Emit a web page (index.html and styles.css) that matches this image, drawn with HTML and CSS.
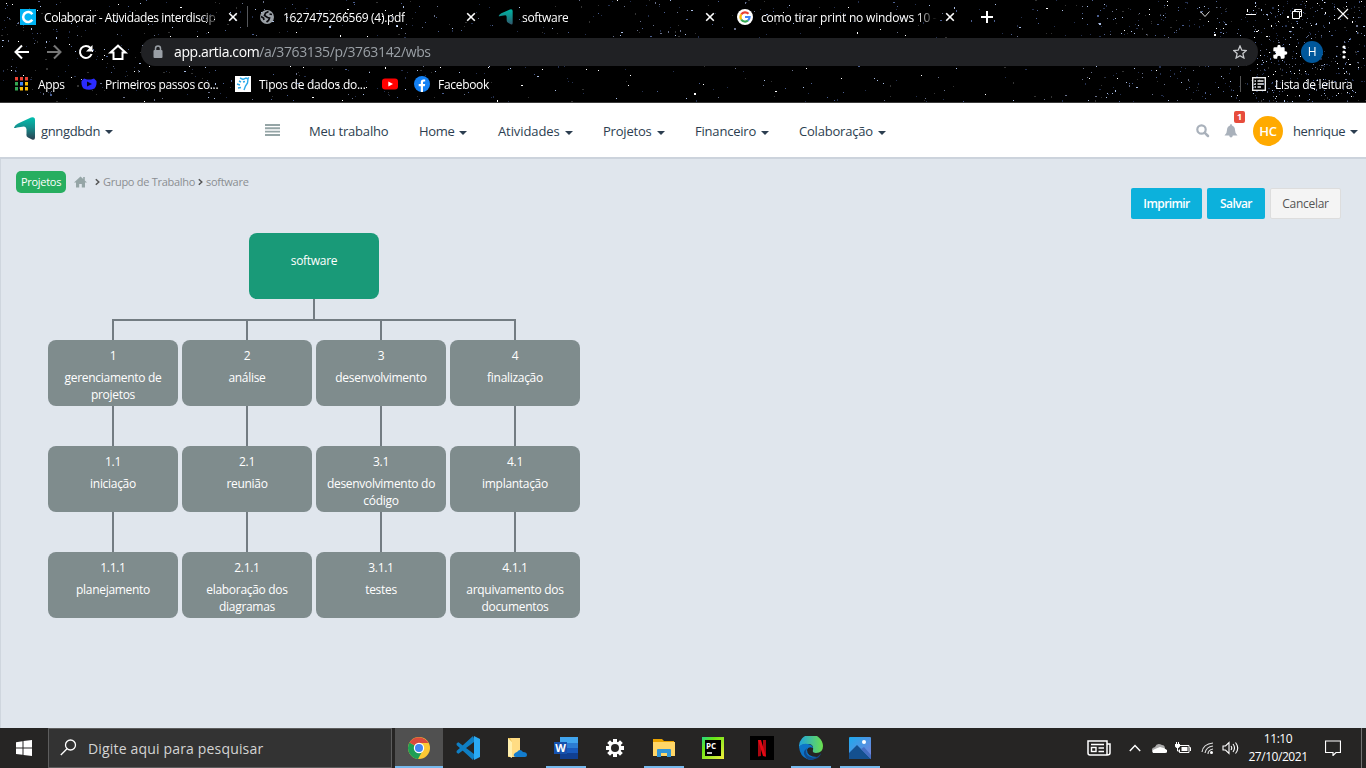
FILE: index.html
```html
<!DOCTYPE html>
<html lang="pt-BR">
<head>
<meta charset="utf-8">
<title>software</title>
<link rel="stylesheet" href="styles.css">
</head>
<body>
<svg class="defs" width="0" height="0"><defs>
<linearGradient id="teal" x1="0" y1="0" x2="0" y2="1"><stop offset="0" stop-color="#00bfae"/><stop offset=".45" stop-color="#148f8d"/><stop offset="1" stop-color="#2c3e50"/></linearGradient>
<linearGradient id="tealtab" x1="0" y1="0" x2="0" y2="1"><stop offset="0" stop-color="#00b5a5"/><stop offset=".5" stop-color="#148b8b"/><stop offset="1" stop-color="#31576b"/></linearGradient>
<linearGradient id="edgeg" x1="0" y1="0" x2="1" y2="0"><stop offset="0" stop-color="#1fa2df"/><stop offset="1" stop-color="#6be04d"/></linearGradient>
<linearGradient id="pcg" x1="0" y1="0" x2="1" y2="1"><stop offset="0" stop-color="#21d789"/><stop offset=".3" stop-color="#67e516"/><stop offset="1" stop-color="#f5f03d"/></linearGradient>
<linearGradient id="phg" x1="0" y1="0" x2="1" y2="1"><stop offset="0" stop-color="#1da9ee"/><stop offset="1" stop-color="#7c7fd8"/></linearGradient>
<symbol id="x" viewBox="0 0 10 10"><path d="M1.200 1.200l7.600 7.600M8.800 1.200L1.200 8.800" stroke="#fff" stroke-width="1.600"/></symbol>
</defs></svg>

<header class="browser">
  <canvas id="stars" class="stars" width="1366" height="102"></canvas>
  <div class="tabs">
    <div class="tab divided"><svg width="16" height="16"><rect width="16" height="16" fill="#00b4f4"/><path d="M12.300 5.200A5 5 0 1 0 12.300 10.800" fill="none" stroke="#fff" stroke-width="2.500"/></svg><span class="title faded t1">Colaborar - Atividades interdiscip</span><svg class="close" width="10" height="10"><use href="#x"/></svg></div>
    <div class="tab"><svg width="16" height="16"><circle cx="8" cy="8" r="7" fill="#9aa0a6"/><path d="M9.500 2.500L6.500 4 5.500 6.500 8.500 8.500 10.500 9 9.500 11.500 7.500 13M2 7.500L4.500 9 5 11M10.500 5L13 5.500" fill="none" stroke="#08080c" stroke-width="1.700"/></svg><span class="title t2">1627475266569 (4).pdf</span><svg class="close" width="10" height="10"><use href="#x"/></svg></div>
    <div class="tab"><svg width="16" height="16" viewBox="0 0 22 24"><path d="M0 10.500Q1 8 4 6.500L17 .6Q21 -.5 21 3V21Q21 24 18 23L14 20.500Q12 19.500 12 17V12Q12 9.500 10 9.500L3 10.500Q0 11.500 0 10.500Z" fill="url(#tealtab)"/></svg><span class="title">software</span><svg class="close" width="10" height="10"><use href="#x"/></svg></div>
    <div class="tab"><svg width="16" height="16"><circle cx="8" cy="8" r="8" fill="#fff"/><g fill="none" stroke-width="2.200"><path d="M4.200 5.500A4.600 4.600 0 0 1 11.500 4.800" stroke="#ea4335"/><path d="M4.200 5.500A4.800 4.800 0 0 0 4.200 10.500" stroke="#fbbc05"/><path d="M4.200 10.500A4.600 4.600 0 0 0 11 11.500" stroke="#34a853"/><path d="M8 8H12.600Q12.500 10 11 11.500" stroke="#4285f4"/></g></svg><span class="title faded t4">como tirar print no windows 10 -</span><svg class="close" width="10" height="10"><use href="#x"/></svg></div>
    <svg class="plus" width="12" height="12"><path d="M6 0V12M0 6H12" stroke="#fff" stroke-width="2"/></svg>
    <div class="window">
      <svg width="46" height="28"><path d="M18.500 11.500L23 16.500 27.500 11.500" fill="none" stroke="#ddd"/></svg>
      <svg width="46" height="28"><path d="M18 14.500H28" stroke="#fff"/></svg>
      <svg width="46" height="28"><path d="M18.500 11.500H25.500V18.500H18.500ZM20.500 11V9.500H27.500V16.500H26" fill="none" stroke="#fff"/></svg>
      <svg width="46" height="28"><path d="M18 9L28 19M28 9L18 19" stroke="#fff" stroke-width="1.200"/></svg>
    </div>
  </div>
  <div class="toolbar">
    <svg width="32" height="28"><path d="M23 14H10M16 7.500L9.500 14 16 20.500" fill="none" stroke="#fff" stroke-width="2"/></svg>
    <svg width="32" height="28"><path d="M9 14H22M16 7.500L22.500 14 16 20.500" fill="none" stroke="#777" stroke-width="2"/></svg>
    <svg width="32" height="28"><path d="M20.500 10A6 6 0 1 0 21.600 16" fill="none" stroke="#fff" stroke-width="2"/><path d="M22.500 7V13.500H16Z" fill="#fff"/></svg>
    <svg width="32" height="28"><path d="M8.500 14.500L16 7.700 23.500 14.500H20.500V21H11.500V14.500Z" fill="none" stroke="#fff" stroke-width="2"/></svg>
    <div class="address"><svg width="33" height="28"><rect x="12.500" y="12" width="9" height="8" rx="1" fill="#9aa0a6"/><path d="M14.500 12V10.500A2.500 2.500 0 0 1 19.500 10.500V12" fill="none" stroke="#9aa0a6" stroke-width="1.500"/></svg><span class="url"><b>app.artia.com</b>/a/3763135/p/3763142/wbs</span><svg class="fav" width="14" height="14"><path d="M7 1L8.800 5.200 13.300 5.600 9.900 8.600 10.900 13 7 10.700 3.100 13 4.100 8.600 .7 5.600 5.200 5.200Z" fill="none" stroke="#c8cacd" stroke-width="1.300"/></svg></div>
    <svg class="puzzle" width="16" height="16" viewBox="0 0 24 24"><path fill="#fff" d="M20.500 11H19V7c0-1.100-.9-2-2-2h-4V3.500a2.500 2.500 0 0 0-5 0V5H4a2 2 0 0 0-2 2v3.800h1.500a2.700 2.700 0 0 1 0 5.400H2V20c0 1.100.9 2 2 2h3.800v-1.500a2.700 2.700 0 0 1 5.400 0V22H17a2 2 0 0 0 2-2v-4h1.500a2.500 2.500 0 0 0 0-5z"/></svg>
    <span class="profile">H</span>
    <svg class="dots" width="6" height="16" fill="#fff"><circle cx="3" cy="3" r="1.600"/><circle cx="3" cy="8" r="1.600"/><circle cx="3" cy="13" r="1.600"/></svg>
  </div>
  <div class="bookmarks">
    <svg class="apps" width="14" height="14"><path fill="#ea4335" d="M1 0h3v3.500H1zM6 0h3v3.500H6zM11 0h3v3.500h-3z"/><path fill="#34a853" d="M1 5h3v3.500H1zM1 10h3v3.500H1z"/><path fill="#4285f4" d="M6 5h3v3.500H6z"/><path fill="#fbbc05" d="M11 5h3v3.500h-3zM6 10h3v3.500H6zM11 10h3v3.500h-3z"/></svg>
    <span class="b1">Apps</span>
    <svg width="16" height="16"><path d="M3 2.500L6 3.500H10L13 2.500 15.500 5Q16 10 13.500 12.500Q8 15 2.500 12.500Q0 10 .5 5Z" fill="#2b2bff"/><path d="M6 5.500L11 8 6 10.500Z" fill="#05051c"/></svg>
    <span class="b2">Primeiros passos co...</span>
    <svg width="16" height="16"><rect width="16" height="16" fill="#fff"/><path d="M5 2L8 3.500 11 2 13 3 12.500 7 10.500 10 9 14M8 6L10 5.500M4 5L6 6M2 8L5 9M3 12L6 11.500M12 3L14 1.500" fill="none" stroke="#2ba9ea" stroke-width="1.400"/></svg>
    <span class="b3">Tipos de dados do...</span>
    <svg width="16" height="16"><rect y="2.500" width="16" height="11" rx="3" fill="#f00"/><path d="M6.300 5.500L11 8 6.300 10.500Z" fill="#fff"/></svg>
    <svg class="fb" width="16" height="16"><circle cx="8" cy="8" r="8" fill="#1381f5"/><path d="M6.800 16V10.200H4.700V7.900H6.800V6.200Q6.800 3.400 9.500 3.400H11.200V5.400H10Q9 5.400 9 6.500V7.900H11.200L10.800 10.200H9V16Z" fill="#fff"/></svg>
    <span>Facebook</span>
    <div class="reading"><svg width="14" height="14"><rect x=".7" y=".7" width="12.600" height="12.600" fill="none" stroke="#eee" stroke-width="1.400"/><path d="M2.500 4H4M5.500 4H11.500M2.500 7H4M5.500 7H11.500M2.500 10H4M5.500 10H9" stroke="#eee" stroke-width="1.500"/></svg><span>Lista de leitura</span></div>
  </div>
</header>

<nav class="appbar">
  <div class="brand"><svg width="22" height="24"><path d="M0 10.500Q1 8 4 6.500L17 .6Q21 -.5 21 3V20.500Q21 23.500 18 22.500L14 20.500Q12 19.500 12.500 17V12Q12 9.500 10 9.500L3 10.500Q0 11.500 0 10.500Z" fill="url(#teal)"/></svg><span>gnngdbdn</span><i class="caret"></i></div>
  <svg class="burger" width="15" height="12"><path d="M0 1H15M0 4.300H15M0 7.600H15M0 11H15" stroke="#95a5a6" stroke-width="1.900"/></svg>
  <div class="menu">
    <span class="m0">Meu trabalho</span>
    <span class="m1">Home<i class="caret"></i></span>
    <span class="m2">Atividades<i class="caret"></i></span>
    <span class="m3">Projetos<i class="caret"></i></span>
    <span class="m4">Financeiro<i class="caret"></i></span>
    <span class="m5">Colaboração<i class="caret"></i></span>
  </div>
  <div class="user">
    <svg width="14" height="14"><circle cx="5.500" cy="5.500" r="4.200" fill="none" stroke="#a9b1bb" stroke-width="2.200"/><path d="M8.800 8.800L12 12" stroke="#a9b1bb" stroke-width="2.500" stroke-linecap="round"/></svg>
    <div class="bell"><svg width="14" height="14"><path d="M7 0Q8 0 8 1.500Q11 2.500 11 6Q11 9.500 13.500 11.500H8.800Q8.500 13.500 7 13.500Q5.500 13.500 5.200 11.500H.5Q3 9.500 3 6Q3 2.500 6 1.500Q6 0 7 0Z" fill="#a9b1bb"/></svg><b>1</b></div>
    <span class="avatar">HC</span><span class="name">henrique</span><i class="caret"></i>
  </div>
</nav>

<main>
  <div class="top">
    <div class="crumbs"><span class="pill">Projetos</span><svg width="13" height="12"><path d="M6.500 .5L0 6.500H2V11.500H5.200V8H7.800V11.500H11V6.500H13L10.800 4.400V1H9.200V3Z" fill="#95a5a6"/></svg><svg class="sep" width="5" height="8"><path d="M.8 1.200L3.800 4 .8 6.800" fill="none" stroke="#555" stroke-width="1.500"/></svg><span class="c1">Grupo de Trabalho</span><svg class="sep2" width="5" height="8"><path d="M.8 1.200L3.800 4 .8 6.800" fill="none" stroke="#555" stroke-width="1.500"/></svg><span>software</span></div>
    <div class="actions"><button class="print">Imprimir</button><button class="save">Salvar</button><button class="cancel">Cancelar</button></div>
  </div>
  <section class="tree">
    <div class="node root">software</div>
    <div class="stem"></div>
    <div class="bar"></div>
    <div class="columns">
      <div class="column"><div class="node"><b>1</b>gerenciamento de<br>projetos</div><div class="node"><b>1.1</b>iniciação</div><div class="node"><b>1.1.1</b>planejamento</div></div>
      <div class="column"><div class="node"><b>2</b>análise</div><div class="node"><b>2.1</b>reunião</div><div class="node"><b>2.1.1</b>elaboração dos<br>diagramas</div></div>
      <div class="column"><div class="node"><b>3</b>desenvolvimento</div><div class="node"><b>3.1</b>desenvolvimento do<br>código</div><div class="node"><b>3.1.1</b>testes</div></div>
      <div class="column"><div class="node"><b>4</b>finalização</div><div class="node"><b>4.1</b>implantação</div><div class="node"><b>4.1.1</b>arquivamento dos<br>documentos</div></div>
    </div>
  </section>
</main>

<footer class="taskbar">
  <svg width="48" height="40" fill="#fff"><path d="M16 14.200L22.500 13.300V19.500H16ZM23.500 13.100L32 12V19.500H23.500ZM16 20.500H22.500V26.800L16 25.900ZM23.500 20.500H32V28L23.500 26.900Z"/></svg>
  <div class="search"><svg width="18" height="18"><circle cx="10.500" cy="6" r="5" fill="none" stroke="#fff" stroke-width="1.300"/><path d="M7 9.700L.8 16" stroke="#fff" stroke-width="1.300"/></svg><span>Digite aqui para pesquisar</span></div>
  <div class="running">
    <div class="app active open"><svg width="22" height="22"><circle cx="11" cy="11" r="11" fill="#fcc934"/><path d="M11 11L1.500 5.500A11 11 0 0 0 10 22L15 13Z" fill="#1e9e55"/><path d="M11 11L1.500 5.500A11 11 0 0 1 20.500 6H11Z" fill="#d94a3d"/><circle cx="11" cy="11" r="5.200" fill="#fff"/><circle cx="11" cy="11" r="4" fill="#4285f4"/></svg></div>
    <div class="app"><svg width="24" height="24"><path d="M17 0L19 5V19L17 24 .8 9.200Q0 8 1 7L2.500 6.300 18 18V6L2.500 17.700 1 17Q0 16 .8 14.800Z" fill="#0f7fc4"/><path d="M18 0L24 3V21L18 24Z" fill="#2aaaf4"/></svg></div>
    <div class="app"><svg width="20" height="22"><path d="M1 1H13V20H1Z" fill="#e9b943"/><path d="M3 1H13V20H5V5Z" fill="#ffdc83"/><path d="M1 1L5 5V21L1 19Z" fill="#fff0ae"/><path d="M9 20Q6 20 7 17Q9 15 10 15Q13 11 16 15Q20 15 20 18Q20 20 18 20Z" fill="#147dce"/></svg></div>
    <div class="app open"><svg width="24" height="22"><path d="M6 0H24V6H6Z" fill="#41a5ee"/><path d="M6 6H24V11H6Z" fill="#2b7cd3"/><path d="M6 11H24V16H6Z" fill="#185abd"/><path d="M6 16H24V22H6Z" fill="#103f91"/><rect y="5" width="13" height="12" fill="#1651ad"/><text x="1.200" y="15" class="wordletter">W</text></svg></div>
    <div class="app"><svg width="20" height="20"><g stroke="#fff" stroke-width="4"><path d="M10 1V19M1 10H19M3.600 3.600L16.400 16.400M16.400 3.600L3.600 16.400"/></g><circle cx="10" cy="10" r="6.500" fill="#fff"/><circle cx="10" cy="10" r="4" fill="#272625"/></svg></div>
    <div class="app open"><svg width="22" height="20"><path d="M0 1H9L11 3H21V8H0Z" fill="#eaa300"/><path d="M0 4H22V18H0Z" fill="#ffd667"/><path d="M4 19V12Q4 11 5 11H17Q18 11 18 12V19H14V15H8V19Z" fill="#3195d6"/></svg></div>
    <div class="app"><svg width="22" height="22"><rect width="22" height="22" fill="url(#pcg)"/><rect x="3" y="3" width="16" height="16" fill="#000"/><text x="4" y="12" class="pctext">PC</text><path d="M5 16H10" stroke="#fff" stroke-width="1.500"/></svg></div>
    <div class="app"><svg width="24" height="24"><rect width="24" height="24" fill="#000"/><path d="M8 4H11V20L8 20.500ZM13 4H16V20.500L13 20Z" fill="#a90610"/><path d="M8 4H11L16 20.500 13 20Z" fill="#e50914"/></svg></div>
    <div class="app open"><svg width="24" height="24"><path d="M0 11A12 12 0 0 1 24 10Q24 17 17 17Q13 17 14 14Q15 8 9 8Q3 8 0 11Z" fill="url(#edgeg)"/><path d="M0 11Q3 7 9 8Q14 9 14 12Q9 10 8 14Q8 21 18 21Q14 25 8 23Q1 20 0 11Z" fill="#0d75c8"/><path d="M8 12Q5 19 12 21Q18 23 22 17Q21 22 16 23Q9 26 6 20Q3 16 8 12Z" fill="#114a8b"/></svg></div>
    <div class="app open"><svg width="22" height="22"><rect width="22" height="22" rx="1" fill="url(#phg)"/><path d="M0 16L8 8 22 22H0Z" fill="#14508f"/><path d="M12 12L15 10 22 18V22Z" fill="#456fc3"/><circle cx="15" cy="5" r="2" fill="#fff"/></svg></div>
  </div>
  <div class="tray">
    <svg class="news" width="24" height="16"><path d="M1 1H20V15H3Q1 15 1 13ZM20 4H23V13Q23 15 20 15M4 4.500H17M11.500 8H17M11.500 11.500H17" fill="none" stroke="#fff" stroke-width="1.500"/><rect x="4.500" y="7.500" width="4.500" height="4" fill="none" stroke="#fff" stroke-width="1.400"/></svg>
    <svg class="chev" width="12" height="8"><path d="M.8 7L6 1.500 11.200 7" fill="none" stroke="#fff" stroke-width="1.400"/></svg>
    <svg class="cloud" width="16" height="11"><path d="M2 9Q-1 5 4 4Q6-1 11 2Q14 2 14 6V9Z" fill="#aaa"/><path d="M2 10Q0 7 4 6L9 4Q14 5 16 7Q17 10 14 10Z" fill="#fff"/></svg>
    <svg class="battery" width="16" height="12"><path d="M5 3.500H14V10.500H4.500V7.500M14.500 5.500H15.500V9" fill="none" stroke="#fff"/><path d="M6.500 5H12.500V9H6.500ZM0 2H5V4.500L3.500 6H1.500L0 4.500Z" fill="#fff"/><path d="M1.500 0V2M3.500 0V2M2.500 6V9H5" fill="none" stroke="#fff"/></svg>
    <svg class="wifi" width="14" height="14"><g fill="none" stroke="#ddd" stroke-width="1.200"><path d="M1 11Q2 3 12 2M4 12Q5 6 12 5M7 13Q7 9 12 8"/></g><circle cx="10.500" cy="11.500" r="1.500" fill="#fff"/></svg>
    <svg class="volume" width="17" height="14"><path d="M1 5H3.500L7 1.500V12.500L3.500 9H1ZM9 5Q10.500 7 9 9M11 3Q14 7 11 11M13.500 1.500Q18 7 13.500 12.500" fill="none" stroke="#fff" stroke-width="1.100"/></svg>
    <div class="clock"><span>11:10</span><span>27/10/2021</span></div>
    <svg class="note" width="16" height="16"><path d="M.5 1H15.500V12.500H11L8 15.500V12.500H.5Z" fill="none" stroke="#fff" stroke-width="1.200"/></svg>
    <i class="edge"></i>
  </div>
</footer>
<script src="stars.js"></script>
</body>
</html>
```
FILE: styles.css
```css
* { box-sizing: border-box; }
body { margin: 0; width: 1366px; height: 768px; overflow: hidden; display: flex; flex-direction: column; font: 12px "Open Sans", "Noto Sans", sans-serif; letter-spacing: -.3px; white-space: nowrap; }
svg { flex: none; display: block; }
.defs { position: absolute; }
.browser { position: relative; height: 103px; background: #000; color: #fff; border-bottom: 1px solid #3b3b3b; flex: none; }
.stars { position: absolute; left: 0; top: 0; }
.tabs, .toolbar, .bookmarks { position: relative; display: flex; align-items: center; }
.tabs { height: 34px; padding-left: 12px; }
.tab { width: 239px; height: 34px; display: flex; align-items: center; padding: 0 18px 0 8px; gap: 8px; flex: none; }
.tab:nth-child(4) { padding-right: 14px; width: 235px; }
.tab .close { margin: 0 -4px 0 auto; }
.divided { background: linear-gradient(#55575b, #55575b) 235px 6px / 1px 21px no-repeat; }
.title { overflow: hidden; flex: none; }
.faded { width: 176px; -webkit-mask-image: linear-gradient(90deg, #000 89%, transparent); mask-image: linear-gradient(90deg, #000 89%, transparent); }
.t1 { letter-spacing: -.4px; }
.t4 { letter-spacing: -.2px; }
.plus { margin-left: 17px; }
.window { display: flex; margin-left: 189px; height: 34px; }
.toolbar { height: 36px; padding-left: 6px; }
.address { display: flex; align-items: center; width: 1117px; height: 28px; border-radius: 14px; background: #202124; margin-left: 7px; }
.url { color: #9aa0a6; font-size: 14px; letter-spacing: -.37px; margin-top: -2px; }
.url b { color: #fff; font-weight: 400; }
.fav { margin: 0 11px 0 auto; }
.puzzle { margin-left: 14px; }
.profile { width: 22px; height: 22px; border-radius: 50%; background: #00579b; text-align: center; line-height: 22px; margin-left: 13px; }
.dots { margin-left: 18px; }
.bookmarks { height: 28px; padding-left: 14px; }
.bookmarks > svg { margin-right: 8px; }
.bookmarks > .apps { margin-right: 10px; }
.b1 { width: 43px; }
.b2 { width: 130px; letter-spacing: -.35px; }
.b3 { width: 123px; letter-spacing: -.25px; }
.bookmarks > .fb { margin-left: 8px; }
.reading { display: flex; align-items: center; gap: 9px; margin-left: auto; padding-left: 11px; width: 126px; border-left: 1px solid #555; height: 16px; }

.appbar { height: 56px; background: #fff; border-bottom: 2px solid #ccd3dc; display: flex; align-items: center; color: #2c3e50; font-size: 13px; flex: none; letter-spacing: -.2px; padding-top: 2px; }
.caret { display: inline-block; border: 4px solid transparent; border-top-color: #2c3e50; border-bottom: 0; margin-left: 5px; vertical-align: 1px; }
.brand { width: 265px; padding-left: 14px; display: flex; align-items: center; gap: 5px; }
.brand svg { margin-top: -4px; }
.brand span { letter-spacing: -.35px; }
.brand .caret, .user .caret { margin-left: 0; margin-top: 2px; }
.burger { margin-top: -2px; }
.menu { display: flex; padding-left: 29px; width: 916px; }
.m0 { width: 110px; } .m1 { width: 79px; } .m2 { width: 105px; } .m3 { width: 92px; } .m4 { width: 104px; }
.m1 { letter-spacing: -.35px; }
.m2 { letter-spacing: -.1px; }
.user { display: flex; align-items: center; }
.user > svg { margin-top: -1px; }
.bell { position: relative; margin-left: 14px; }
.bell b { position: absolute; left: 10px; top: -13px; width: 11px; height: 12px; border-radius: 2px; background: #e74c3c; color: #fff; font-size: 9px; line-height: 12px; text-align: center; }
.avatar { width: 30px; height: 30px; line-height: 30px; border-radius: 50%; background: #ffaa00; color: #fff; font-weight: 600; text-align: center; margin-left: 15px; margin-top: -1px; }
.name { margin-left: 10px; width: 57px; letter-spacing: -.35px; }

main { height: 569px; background: #e0e6ed; border-left: 1px solid #cfd6de; flex: none; }
.top { display: flex; justify-content: space-between; height: 74px; padding: 12px 25px 0 15px; }
.crumbs { display: flex; align-items: center; height: 22px; color: #8b8e92; font-size: 11px; letter-spacing: -.28px; line-height: 20px; }
.crumbs > span:not(.pill) { margin-top: -1px; }
.pill { width: 50px; height: 22px; border-radius: 5px; background: #27ae60; color: #fff; line-height: 22px; text-align: center; margin-right: 8px; }
.sep { margin: 0 3px 0 8px; }
.c1 { width: 95px; }
.sep2 { margin-right: 3px; }
.actions { display: flex; gap: 5px; padding-top: 17px; }
.actions button { height: 31px; padding: 0; border: 0; border-radius: 2px; background: #0cb1dc; color: #fff; font: 600 12px "Open Sans", sans-serif; letter-spacing: -.6px; }
.actions .print { width: 71px; } .actions .save { width: 58px; }
.actions .cancel { width: 71px; background: #f4f4f4; border: 1px solid #ddd; color: #555; font-weight: 400; letter-spacing: -.3px; }
.tree { width: 532px; margin-left: 47px; display: flex; flex-direction: column; align-items: center; letter-spacing: -.3px; }
.node { width: 130px; height: 66px; border-radius: 8px; background: #7f8c8d; color: #fff; text-align: center; line-height: 17px; padding-top: 7px; }
.node b { display: block; font-weight: 400; margin-bottom: 5px; }
.root { background: #199a78; padding-top: 19px; }
.stem { width: 2px; height: 20px; background: #737c82; }
.bar { width: 404px; height: 21px; border: 2px solid #737c82; border-bottom: 0; background: linear-gradient(#737c82, #737c82) 132px 0 / 2px 21px no-repeat, linear-gradient(#737c82, #737c82) 266px 0 / 2px 21px no-repeat; }
.columns { display: flex; gap: 4px; }
.column { display: flex; flex-direction: column; gap: 40px; background: linear-gradient(#737c82, #737c82) 64px 0 / 2px 260px no-repeat; }

.taskbar { height: 40px; display: flex; background: #262524; color: #fff; flex: none; }
.search { width: 344px; border: 1px solid #5d5d5d; background: #333; display: flex; align-items: center; padding-left: 11px; gap: 10px; font-size: 14px; letter-spacing: .17px; color: #d4d4d4; }
.running { display: flex; gap: 1px; margin-left: 3px; }
.app { width: 48px; height: 40px; display: flex; align-items: center; justify-content: center; }
.open { background: linear-gradient(#76b9ed, #76b9ed) 4px 38px / 40px 2px no-repeat; }
.active { background: linear-gradient(#76b9ed, #76b9ed) 0 38px / 48px 2px no-repeat #505050; }
.wordletter { font: 700 11px "Open Sans", sans-serif; fill: #fff; }
.pctext { font: 700 8px "Open Sans", sans-serif; fill: #fff; letter-spacing: 0; }
.tray { display: flex; align-items: center; margin-left: 203px; }
.chev { margin-left: 18px; }
.cloud { margin-left: 10px; }
.battery { margin-left: 8px; }
.wifi { margin-left: 10px; }
.volume { margin-left: 7px; }
.clock { display: flex; flex-direction: column; text-align: center; width: 60px; line-height: 18px; margin-left: 9px; letter-spacing: -.45px; }
.note { margin-left: 17px; }
.edge { width: 1px; height: 40px; background: #737373; margin-left: 20px; }
```
FILE: stars.js
```js
// Night-sky theme behind the tab strip: density rises toward the right edge.
const sky = document.getElementById('stars').getContext('2d');
let seed = 73;
const rnd = () => (seed = (seed * 16807) % 2147483647) / 2147483647;
const tones = ['#24304f', '#333', '#4b5f91', '#68708a', '#a9bde4', '#ffffff'];
function scatter(x, y, w, h, count) {
  for (let i = 0; i < count; i++) {
    const k = Math.floor(Math.pow(rnd(), 1.5) * tones.length);
    sky.fillStyle = tones[k];
    sky.fillRect(Math.floor(x + rnd() * w), Math.floor(y + rnd() * h), rnd() > .88 ? 2 : 1, rnd() > .88 ? 2 : 1);
  }
}
scatter(0, 0, 420, 102, 420);
scatter(420, 0, 480, 102, 300);
scatter(900, 0, 180, 102, 90);
scatter(1080, 0, 286, 102, 520);
scatter(1250, 0, 116, 102, 240);
```
